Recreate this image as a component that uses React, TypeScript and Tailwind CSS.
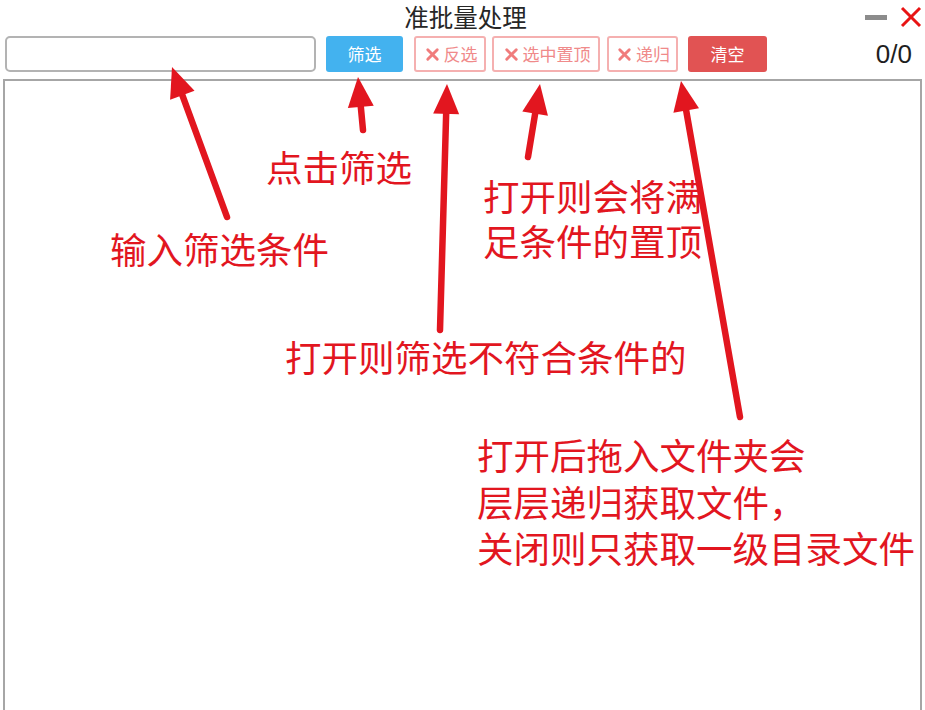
import { X } from "lucide-react";

const red = "#e2161f";

// tail -> tip, drawn as a thick line with a filled head
const arrows = [
  { x1: 227, y1: 217, x2: 172, y2: 67 },
  { x1: 363, y1: 130, x2: 358, y2: 77 },
  { x1: 440, y1: 330, x2: 447, y2: 84 },
  { x1: 528, y1: 157, x2: 540, y2: 84 },
  { x1: 740, y1: 417, x2: 681, y2: 81 },
];

const Arrow = ({ x1, y1, x2, y2 }: { x1: number; y1: number; x2: number; y2: number }) => {
  const dx = x2 - x1;
  const dy = y2 - y1;
  const len = Math.hypot(dx, dy);
  const ux = dx / len;
  const uy = dy / len;
  const headLen = 30;
  const half = 13;
  const bx = x2 - ux * headLen;
  const by = y2 - uy * headLen;
  const p1 = `${bx - uy * half},${by + ux * half}`;
  const p2 = `${bx + uy * half},${by - ux * half}`;
  return (
    <g>
      <line
        x1={x1}
        y1={y1}
        x2={bx + ux * 4}
        y2={by + uy * 4}
        stroke={red}
        strokeWidth={6.5}
        strokeLinecap="round"
      />
      <polygon points={`${x2},${y2} ${p1} ${p2}`} fill={red} />
    </g>
  );
};

const OutlineButton = ({ label, width }: { label: string; width: string }) => (
  <button
    className={`${width} h-[36px] flex items-center justify-center gap-[2px] rounded-[3px] border-2 border-[#f5b0b0] bg-white text-[17px] text-[#f08a8a]`}
  >
    <X className="w-[19px] h-[19px] text-[#f07c7c]" strokeWidth={3.6} />
    <span>{label}</span>
  </button>
);

const Note = ({ className, lines }: { className: string; lines: string[] }) => (
  <div className={`absolute flex flex-col text-[36.5px] leading-none text-[#e2161f] whitespace-nowrap ${className}`}>
    {lines.map((l) => (
      <div key={l}>{l}</div>
    ))}
  </div>
);

export default function App() {
  return (
    <div className="relative w-[925px] h-[710px] overflow-hidden bg-white flex flex-col font-['Noto_Sans_CJK_SC',sans-serif]">
      {/* Title bar */}
      <div className="h-[34px] grid grid-cols-[1fr_auto_1fr] items-center">
        <div />
        <div className="pl-[6px] text-[24.5px] leading-none text-[#262626]">准批量处理</div>
        <div className="flex items-center justify-end gap-[13px] pr-[3px]">
          <div className="w-[22px] h-[5px] bg-[#8c8c8c]" />
          <svg width="22" height="22" viewBox="0 0 22 22">
            <line x1="2" y1="2" x2="20" y2="20" stroke="#e81414" strokeWidth="3" />
            <line x1="20" y1="2" x2="2" y2="20" stroke="#e81414" strokeWidth="3" />
          </svg>
        </div>
      </div>

      {/* Toolbar */}
      <div className="mt-[2px] h-[36px] flex items-center pl-[5px] pr-[13px]">
        <input className="w-[311px] h-[36px] rounded-[5px] border-2 border-[#b3b3b3] outline-none" />
        <button className="ml-[10px] w-[77px] h-[36px] rounded-[3px] bg-[#43b2ef] text-[17px] text-white">
          筛选
        </button>
        <div className="ml-[11px]">
          <OutlineButton label="反选" width="w-[72px]" />
        </div>
        <div className="ml-[6px]">
          <OutlineButton label="选中置顶" width="w-[108px]" />
        </div>
        <div className="ml-[7px]">
          <OutlineButton label="递归" width="w-[71px]" />
        </div>
        <button className="ml-[10px] w-[79px] h-[36px] rounded-[3px] bg-[#e15353] text-[17px] text-white">
          清空
        </button>
        <div className="ml-auto text-[26px] leading-none text-[#1e1e1e] font-['Liberation_Sans',sans-serif]">
          0/0
        </div>
      </div>

      {/* File list */}
      <div className="mt-[7px] mx-[3px] flex-1 border-2 border-b-0 border-[#a6a6a6]" />

      {/* Annotations */}
      <svg className="absolute inset-0 pointer-events-none" width="925" height="710">
        {arrows.map((a, i) => (
          <Arrow key={i} {...a} />
        ))}
      </svg>
      <Note className="left-[266px] top-[149px]" lines={["点击筛选"]} />
      <Note className="left-[110px] top-[231px]" lines={["输入筛选条件"]} />
      <Note className="left-[483px] top-[178px] gap-[8px]" lines={["打开则会将满", "足条件的置顶"]} />
      <Note className="left-[285px] top-[339px]" lines={["打开则筛选不符合条件的"]} />
      <Note
        className="left-[477px] top-[437px] gap-[10px]"
        lines={["打开后拖入文件夹会", "层层递归获取文件，", "关闭则只获取一级目录文件"]}
      />
    </div>
  );
}
